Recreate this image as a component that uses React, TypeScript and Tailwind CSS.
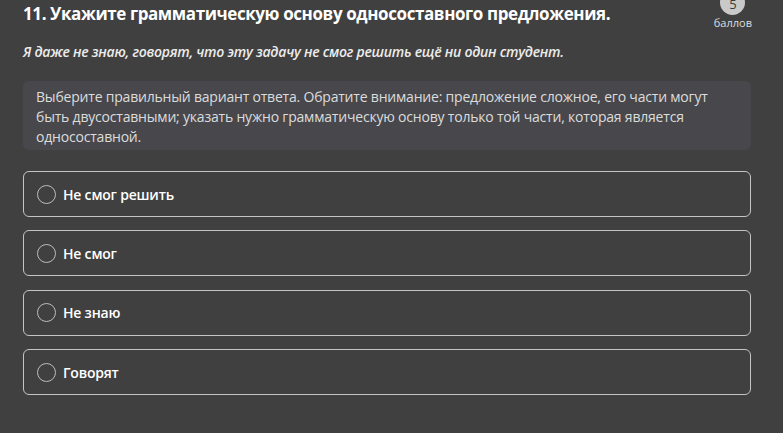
import React from "react";

const options = ["Не смог решить", "Не смог", "Не знаю", "Говорят"];

export default function App() {
  return (
    <div
      className="relative min-h-[433px] w-full overflow-hidden bg-[#404040] pl-[23px] pr-[32px] pt-[2px] text-white"
      style={{ fontFamily: '"Open Sans", "Noto Sans", sans-serif' }}
    >
      {/* баллы */}
      <div className="absolute right-[31px] top-[-10px] flex flex-col items-center">
        <div className="flex h-[25px] w-[25px] items-center justify-center rounded-full bg-[#c9c9c9] pt-[5px] text-[13px] text-[#3a3a3a]">
          5
        </div>
        <div className="mt-[1px] text-[11px] leading-[14px] text-[#dedede]">баллов</div>
      </div>

      <h1 className="text-[17px] font-bold leading-[24px] tracking-[-0.4px]">
        11. Укажите грамматическую основу односоставного предложения.
      </h1>

      <p className="mt-[17px] text-[14px] font-semibold italic leading-[18px] tracking-[-0.25px] text-[#ececec]">
        Я даже не знаю, говорят, что эту задачу не смог решить ещё ни один студент.
      </p>

      <div className="mt-[20px] rounded-[6px] bg-[#48484c] px-[13px] pb-[3px] pt-[6px] text-[14px] leading-[20px] tracking-[-0.2px] text-[#dcdcdc]">
        Выберите правильный вариант ответа. Обратите внимание: предложение сложное, его части могут
        быть двусоставными; указать нужно грамматическую основу только той части, которая является
        односоставной.
      </div>

      <div className="mt-[21px] flex flex-col gap-[13.4px]">
        {options.map((o) => (
          <label
            key={o}
            className="flex h-[46px] items-center gap-[7px] rounded-[6px] border border-[#c4c4c4] px-[13px]"
          >
            <span className="h-[19px] w-[19px] shrink-0 rounded-full border border-[#bdbdbd]" />
            <span className="text-[14px] font-semibold tracking-[-0.2px] text-white">{o}</span>
          </label>
        ))}
      </div>
    </div>
  );
}
